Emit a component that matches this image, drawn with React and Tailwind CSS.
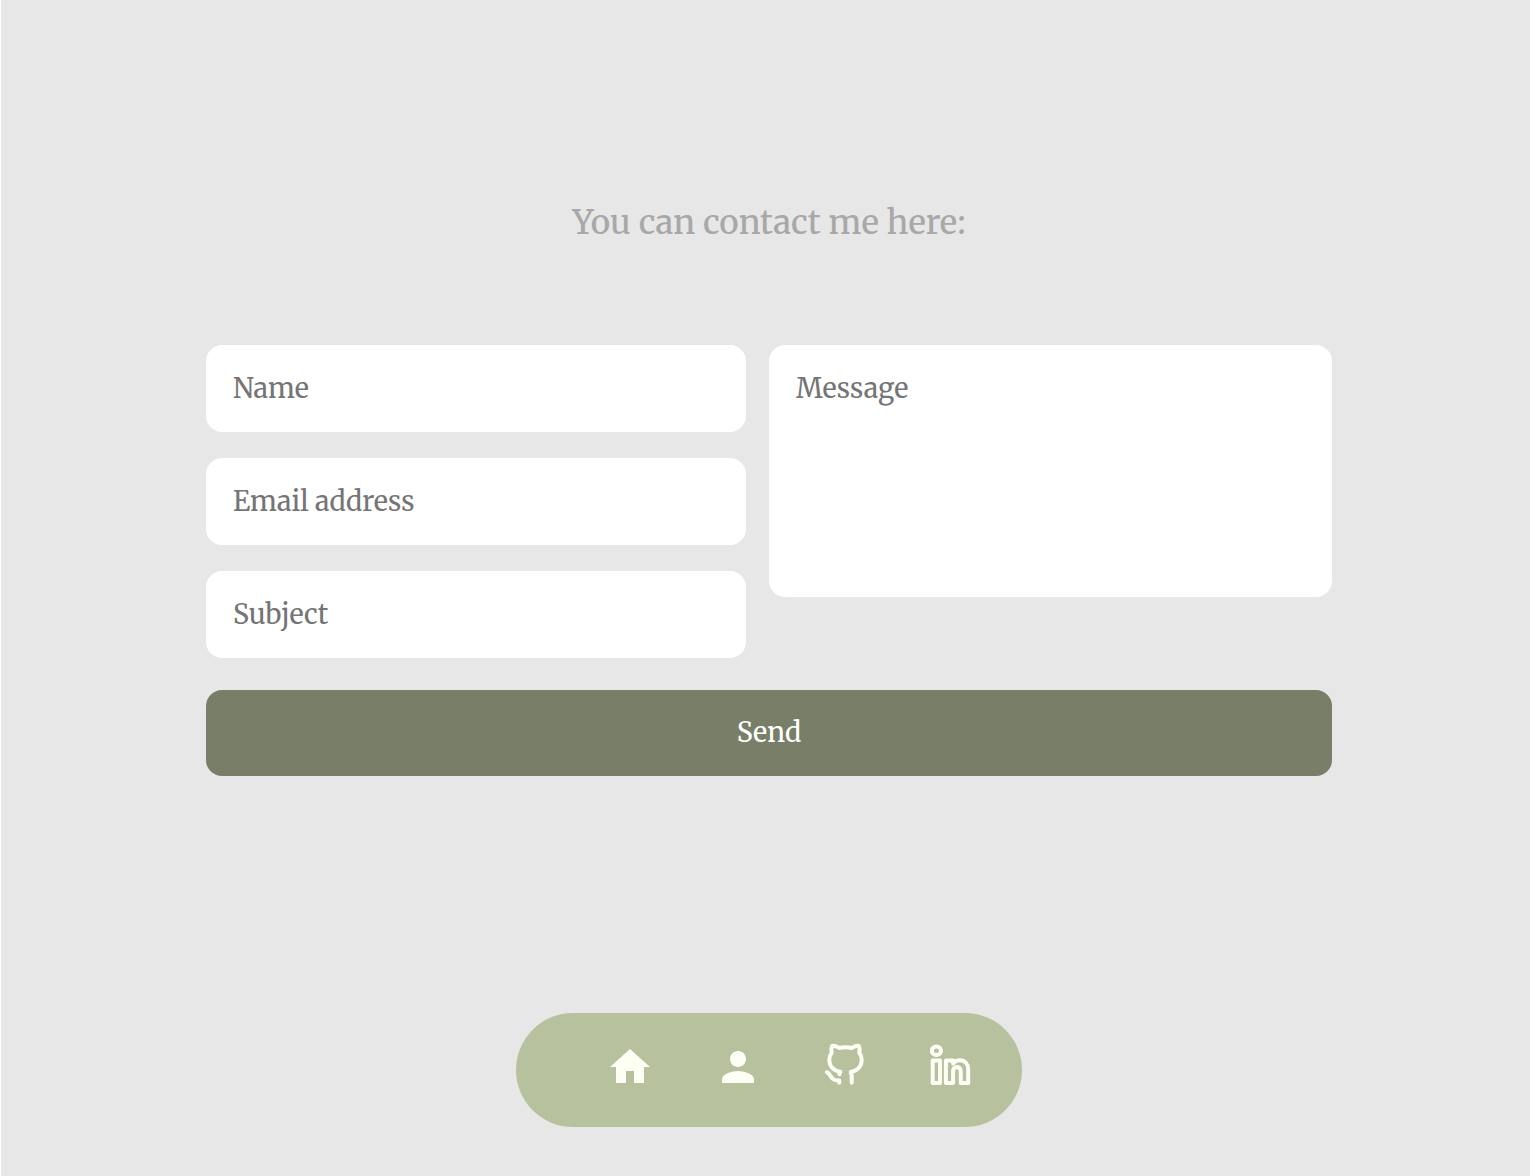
import React from "react";

const fieldClass =
  "block w-full rounded-2xl bg-white px-[27px] py-6 text-[27px] leading-[39px] text-[#757575] placeholder:text-[#757575] placeholder:opacity-100 outline-none";

function HomeIcon() {
  return (
    <svg viewBox="0 0 24 24" className="size-12" fill="currentColor" aria-hidden="true">
      <path d="M10 20v-6h4v6h5v-8h3L12 3 2 12h3v8z" />
    </svg>
  );
}

function PersonIcon() {
  return (
    <svg viewBox="0 0 24 24" className="size-12" fill="currentColor" aria-hidden="true">
      <path d="M12 12c2.21 0 4-1.79 4-4s-1.79-4-4-4-4 1.79-4 4 1.79 4 4 4zm0 2c-2.67 0-8 1.34-8 4v2h16v-2c0-2.66-5.33-4-8-4z" />
    </svg>
  );
}

function GithubIcon() {
  return (
    <svg
      viewBox="0 0 48 48"
      className="size-12"
      fill="none"
      stroke="currentColor"
      strokeWidth="4"
      strokeLinecap="round"
      strokeLinejoin="round"
      aria-hidden="true"
    >
      <path d="M17.4 31.2L18.3 28.7C11 27.6 7.3 22.8 7.3 16.8C7.3 13.8 8.1 11.8 9.7 9.8C9.2 7.2 9.3 4.6 10.2 2.9C12.8 2.6 15 3.6 17.4 5C21 4.2 26 4.2 29.6 5C32 3.6 34.2 2.6 36.8 2.9C37.7 4.6 37.8 7.2 37.3 9.8C38.9 11.8 39.7 13.8 39.7 16.8C39.7 22.8 36 27.6 28.7 28.9L29.7 32.2V39.8" />
      <path d="M4.8 29.2C7.6 30.3 8.3 33.3 10.5 35.6C12.2 37.2 14.4 37.8 17.3 37.4V39.8" />
    </svg>
  );
}

function LinkedinIcon() {
  return (
    <svg
      viewBox="0 0 48 48"
      className="size-12"
      fill="none"
      stroke="currentColor"
      strokeWidth="4"
      strokeLinejoin="round"
      aria-hidden="true"
    >
      <ellipse cx="6.4" cy="7.7" rx="4.6" ry="4.2" />
      <path d="M2.7 17.6H10V40.1H2.7Z" />
      <path d="M15.9 17.6H23.1V20.6C24.8 18.3 27.2 17.3 29.7 17.3C35 17.3 38.2 21 38.2 26.2V40.1H30.7V28.8C30.7 25.6 29.2 24 26.9 24C24.7 24 23.1 25.7 23.1 28.8V40.1H15.9Z" />
    </svg>
  );
}

const links = [
  { label: "Home", href: "#home", Icon: HomeIcon },
  { label: "About", href: "#about", Icon: PersonIcon },
  { label: "GitHub", href: "#github", Icon: GithubIcon },
  { label: "LinkedIn", href: "#linkedin", Icon: LinkedinIcon },
];

export default function App() {
  return (
    <div className="flex min-h-screen flex-col items-center border-l border-white bg-[#e7e7e7] pb-[49px] pl-[7px] font-['Merriweather','DejaVu_Serif_Condensed','DejaVu_Serif',serif]">
      <main className="w-full max-w-[1126px] pt-[200px]">
        <h1 className="text-center text-[33px] leading-[46px] font-medium text-[#a8a8a8]">
          You can contact me here:
        </h1>
        <form className="mt-[99px]" onSubmit={(e) => e.preventDefault()}>
          <div className="grid grid-cols-[540fr_563fr] items-start gap-[23px]">
            <div className="flex flex-col gap-[26px]">
              <input type="text" name="name" aria-label="Name" placeholder="Name" className={fieldClass} />
              <input type="email" name="email" aria-label="Email address" placeholder="Email address" className={fieldClass} />
              <input type="text" name="subject" aria-label="Subject" placeholder="Subject" className={fieldClass} />
            </div>
            <textarea
              name="message"
              aria-label="Message"
              placeholder="Message"
              className={`${fieldClass} h-[252px] resize-none`}
            />
          </div>
          <button
            type="submit"
            className="mt-8 w-full rounded-2xl bg-[#797e68] pt-[23px] pb-[25px] text-[27px] leading-[38px] text-white"
          >
            Send
          </button>
        </form>
      </main>
      <nav
        aria-label="Main"
        className="mt-auto flex gap-[60px] rounded-full bg-[#b8c19d] pt-[30px] pr-11 pb-9 pl-[90px] text-[#fdfff5]"
      >
        {links.map(({ label, href, Icon }) => (
          <a key={label} href={href} aria-label={label}>
            <Icon />
          </a>
        ))}
      </nav>
    </div>
  );
}
